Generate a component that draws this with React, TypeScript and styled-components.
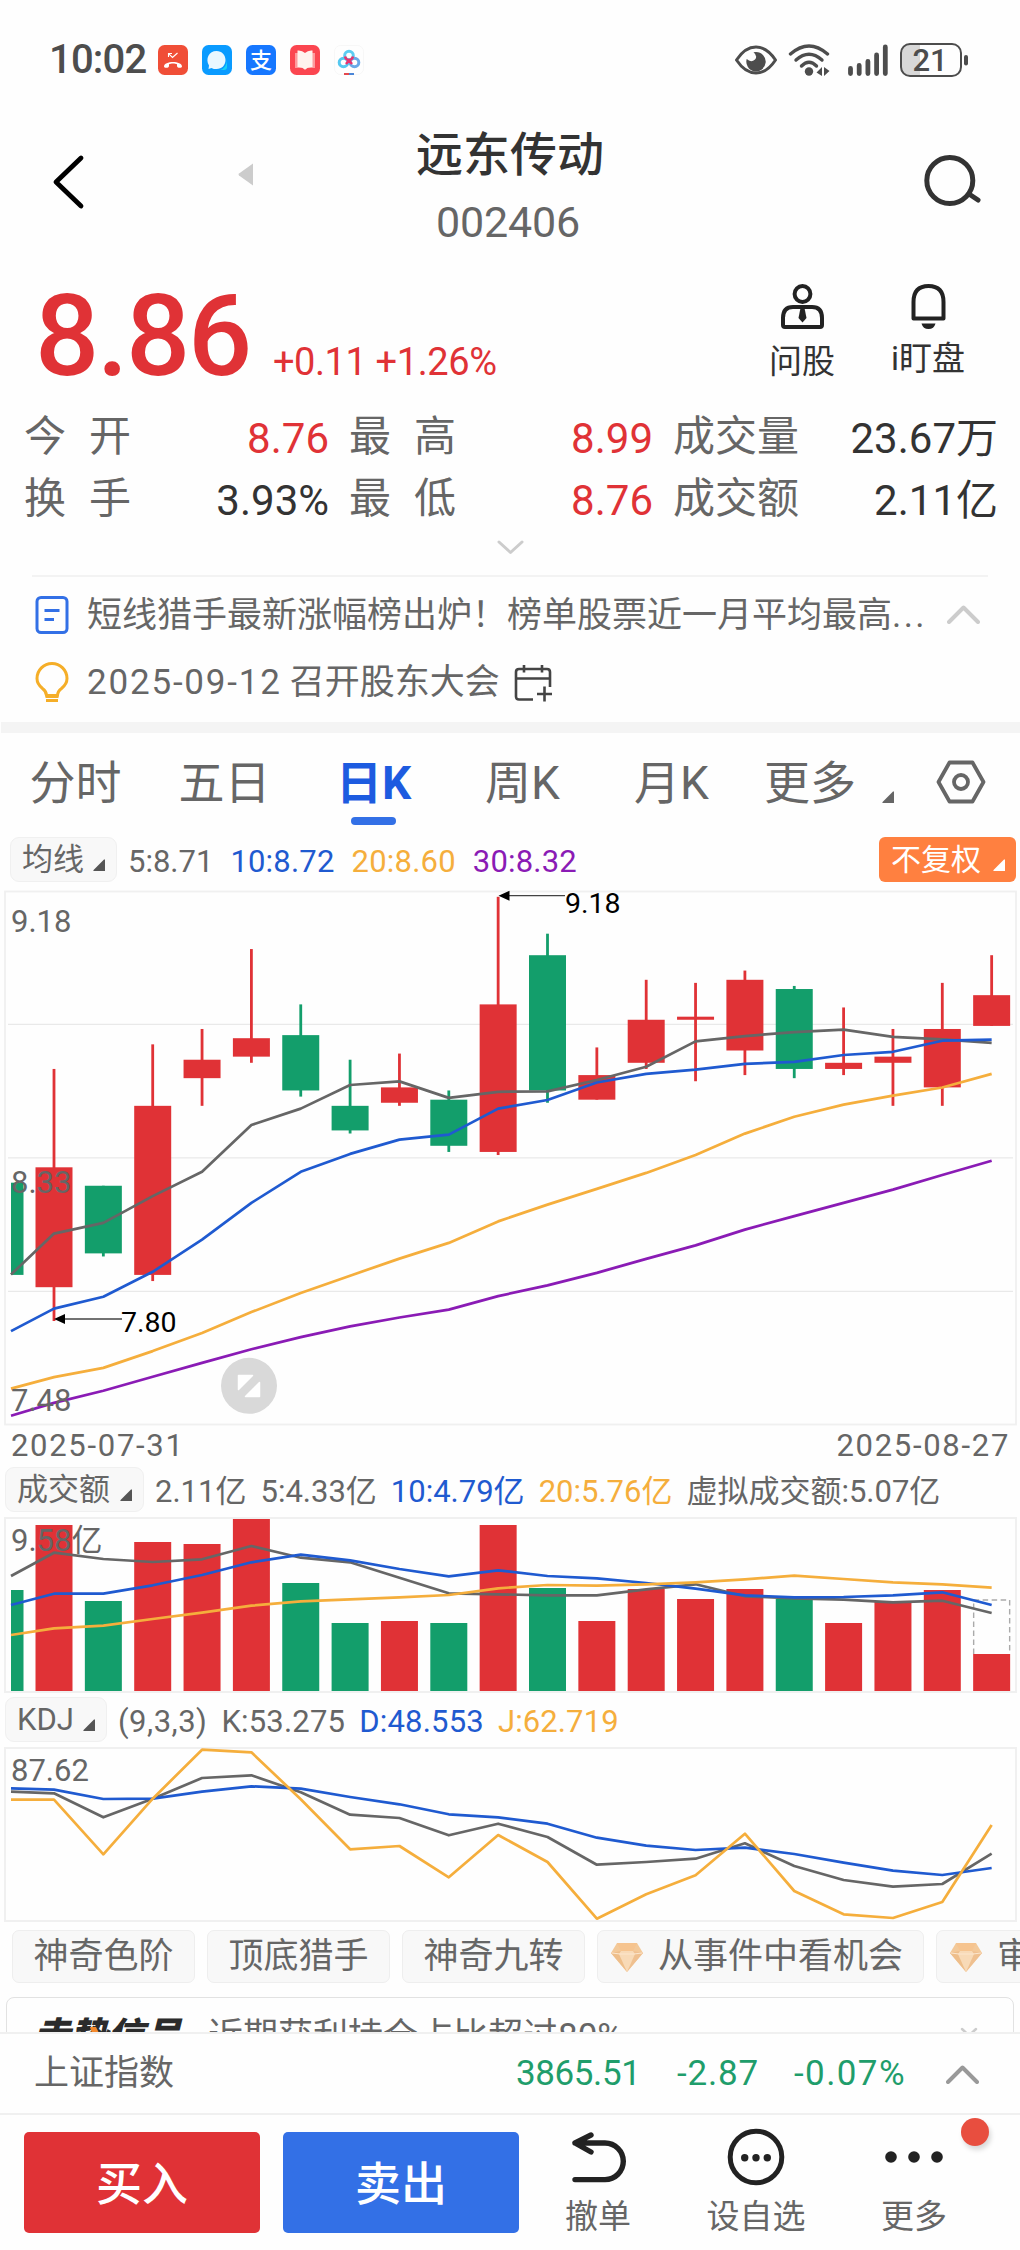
import React from 'react';
import styled, { createGlobalStyle } from 'styled-components';

const RED = '#e03236';
const GREEN = '#139e6b';
const BLUE = '#1f5ad0';
const AMBER = '#f5ae3c';
const PURPLE = '#8a1bb5';
const GREY = '#666666';
const FONT = "Roboto, 'Noto Sans CJK SC', sans-serif";

const GlobalStyle = createGlobalStyle`
  body { margin: 0; background: #fff; }
  * { box-sizing: border-box; }
  svg { display: block; flex: none; }
`;

const Page = styled.div`
  display: flex;
  flex-direction: column;
  width: 1020px;
  height: 2250px;
  overflow: hidden;
  background: #fefefe;
  color: ${GREY};
  font-family: ${FONT};
  white-space: nowrap;
`;

/* ---------- status bar ---------- */

const StatusBar = styled.div`
  display: flex;
  align-items: center;
  height: 120px;
  padding: 0 52px 0 49px;
`;
const Clock = styled.span`
  width: 109px;
  color: #4d4d4d;
  font-size: 40px;
  font-weight: 500;
  line-height: 48px;
  letter-spacing: -0.8px;
`;
const AppIcons = styled.div`
  display: flex;
  gap: 14px;
  flex: 1;
`;
const SystemIcons = styled.div`
  display: flex;
  align-items: center;
`;

/* ---------- title bar ---------- */

const TitleBar = styled.header`
  display: grid;
  grid-template-columns: 300px 1fr 300px;
  height: 140px;
`;
const TitleSide = styled.div<{ $end?: boolean }>`
  display: flex;
  align-items: center;
  justify-content: ${p => (p.$end ? 'flex-end' : 'flex-start')};
  height: 123px;
  padding: ${p => (p.$end ? '0 38px 0 0' : '0 0 0 50px')};
`;
const PrevMark = styled.span`
  margin: 0 0 14px 152px;
`;
const TitleText = styled.div`
  display: flex;
  flex-direction: column;
  align-items: center;
`;
const StockName = styled.h1`
  margin: 0;
  color: #333;
  font-size: 47px;
  font-weight: 500;
  line-height: 69px;
`;
const StockCode = styled.span`
  margin-right: 4px;
  font-size: 43px;
  line-height: 66px;
  letter-spacing: -0.2px;
`;

/* ---------- quote ---------- */

const QuoteHead = styled.section`
  display: flex;
  justify-content: space-between;
  height: 148px;
  padding: 0 29px 0 35px;
`;
const PriceLine = styled.div`
  display: flex;
  align-items: baseline;
  gap: 23px;
  padding-top: 17px;
  color: ${RED};
`;
const Price = styled.span`
  font-size: 113px;
  font-weight: 500;
  line-height: 120px;
  letter-spacing: -2.3px;
`;
const Change = styled.span`
  font-size: 38px;
  letter-spacing: -0.4px;
`;
const QuoteActions = styled.div`
  display: flex;
`;
const QuoteAction = styled.div<{ $gap: number }>`
  display: flex;
  flex-direction: column;
  align-items: center;
  gap: ${p => p.$gap}px;
  width: 126px;
  padding-top: 24px;
  color: #333;
  font-size: 33px;
  line-height: 38px;
`;

const StatGrid = styled.section`
  display: grid;
  grid-template-columns: 305px 304px 325px;
  column-gap: 20px;
  grid-auto-rows: 62px;
  padding: 0 23px 0 24px;
`;
const Stat = styled.div`
  display: flex;
  justify-content: space-between;
  font-size: 42px;
  line-height: 61px;
`;
const StatLabel = styled.span`
  line-height: 57px;
  word-spacing: 12.5px;
`;
const StatValue = styled.span<{ $up?: boolean }>`
  color: ${p => (p.$up ? RED : '#333')};
`;
const ExpandRow = styled.div`
  display: flex;
  align-items: center;
  justify-content: center;
  height: 43px;
  padding-bottom: 12px;
`;

/* ---------- notices ---------- */

const Notices = styled.section`
  margin: 0 32px;
  border-top: 2px solid #f3f3f3;
`;
const Notice = styled.div<{ $h: number }>`
  display: flex;
  align-items: center;
  height: ${p => p.$h}px;
  padding: 0 8px 0 3px;
  font-size: 35px;
  line-height: 44px;
`;
const NoticeText = styled.span`
  flex: 1;
  margin-left: 18px;
  padding-top: 2px;
`;
const Dots = styled.span`
  letter-spacing: 2.4px;
`;
const NoticeDate = styled.span`
  margin-left: 18px;
  letter-spacing: 1.8px;
`;
const NoticeEvent = styled.span`
  margin: 0 14px 0 8px;
`;
const Band = styled.div`
  height: 11px;
  margin: 9px 0 0 1px;
  background: #f4f4f4;
`;

/* ---------- period tabs ---------- */

const Tabs = styled.nav`
  display: flex;
  align-items: center;
  height: 98px;
  padding: 0 34px 0 1px;
`;
const Tab = styled.div<{ $active?: boolean }>`
  position: relative;
  width: 149px;
  padding-top: 2px;
  color: ${p => (p.$active ? '#1d5be0' : GREY)};
  font-size: 46px;
  font-weight: ${p => (p.$active ? 700 : 400)};
  line-height: 96px;
  text-align: center;
  &::after {
    content: '';
    display: ${p => (p.$active ? 'block' : 'none')};
    position: absolute;
    left: 52px;
    bottom: 6px;
    width: 45px;
    height: 8px;
    border-radius: 4px;
    background: #3370e6;
  }
`;
const MoreTab = styled.div`
  display: flex;
  align-items: center;
  flex: 1;
  gap: 26px;
  padding: 3px 0 0 18px;
  font-size: 46px;
  line-height: 95px;
`;
const MoreMark = styled.span`
  padding-top: 27px;
`;

/* ---------- indicator rows ---------- */

const Legend = styled.div<{ $top: number; $gap: number }>`
  display: flex;
  align-items: center;
  gap: ${p => p.$gap}px;
  height: 45px;
  margin-top: ${p => p.$top}px;
  padding: 0 4px 0 5px;
  font-size: 31px;
  line-height: 43px;
`;
const Chip = styled.span<{ $w: number; $left?: number; $mr?: number }>`
  display: flex;
  align-items: center;
  justify-content: space-between;
  width: ${p => p.$w}px;
  height: 45px;
  margin-left: ${p => p.$left ?? 0}px;
  margin-right: ${p => p.$mr ?? 0}px;
  padding: 0 10px 0 11px;
  border: 1px solid #f0f0f0;
  border-radius: 9px;
  background: #f8f8f8;
`;
const AdjustButton = styled.span`
  display: flex;
  align-items: center;
  justify-content: space-between;
  width: 137px;
  height: 45px;
  margin-left: auto;
  padding: 0 10px 0 12px;
  border-radius: 6px;
  background: #ff8040;
  color: #fff;
  font-size: 30px;
`;
const Corner = styled.span`
  padding-top: 11px;
`;
const Reading = styled.span<{ $c?: string; $ls?: number }>`
  padding-top: 3px;
  color: ${p => p.$c ?? GREY};
  letter-spacing: ${p => p.$ls ?? 0}px;
`;
const ChartBox = styled.div<{ $top: number }>`
  margin-top: ${p => p.$top}px;
`;
const Dates = styled.div`
  display: flex;
  justify-content: space-between;
  height: 41px;
  padding: 0 10px 0 11px;
  font-size: 31px;
  line-height: 39px;
  letter-spacing: 1.7px;
`;

/* ---------- strategy pills ---------- */

const Pills = styled.div`
  display: flex;
  gap: 12px;
  height: 53px;
  margin-top: 8px;
  padding-left: 12px;
`;
const Pill = styled.div<{ $gem?: boolean }>`
  display: flex;
  align-items: center;
  flex: none;
  gap: 15px;
  padding: ${p => (p.$gem ? '1px 20px 0 13px' : '1px 20.5px 0')};
  border: 1px solid #eee;
  border-radius: 7px;
  background: #f8f8f8;
  font-size: 35px;
  line-height: 50px;
`;
const SignalArea = styled.div`
  height: 49px;
  padding: 14px 6px 0;
  overflow: hidden;
`;
const SignalCard = styled.div`
  display: flex;
  align-items: center;
  height: 80px;
  padding: 0 35px 0 26px;
  border: 1px solid #e2e2e2;
  border-radius: 8px;
  font-size: 35px;
  line-height: 76px;
`;
const SignalLogo = styled.span`
  position: relative;
  width: 175px;
  color: #2b2b2b;
  font-size: 37px;
  font-style: italic;
  font-weight: 900;
`;
const LogoSlash = styled.span`
  position: absolute;
  left: 57px;
  top: 28px;
`;
const SignalText = styled.span`
  flex: 1;
`;
const SignalToggle = styled.span`
  padding-bottom: 9px;
`;

/* ---------- index bar and footer ---------- */

const IndexBar = styled.div`
  display: flex;
  align-items: center;
  height: 83px;
  padding: 1px 41px 0 34px;
  border-top: 2px solid #f0f0f0;
  border-bottom: 2px solid #f0f0f0;
  font-size: 35px;
  line-height: 44px;
`;
const IndexName = styled.span`
  width: 482px;
`;
const IndexValue = styled.span<{ $w: number; $ls: number }>`
  width: ${p => p.$w}px;
  color: #1f9d6b;
  letter-spacing: ${p => p.$ls}px;
`;
const Footer = styled.footer`
  display: flex;
  align-items: flex-start;
  height: 135px;
  padding: 17px 0 0 24px;
`;
const TradeButton = styled.button<{ $bg: string }>`
  width: 236px;
  height: 101px;
  margin: 0 23px 0 0;
  padding: 0 0 5px;
  border: 0;
  border-radius: 5px;
  background: ${p => p.$bg};
  color: #fff;
  font-family: ${FONT};
  font-size: 46px;
  font-weight: 500;
`;
const FooterActions = styled.div`
  display: flex;
  margin: -5px 0 0 -23px;
`;
const FooterAction = styled.div`
  display: flex;
  flex-direction: column;
  align-items: center;
  position: relative;
  gap: 9px;
  width: 158px;
  font-size: 33px;
  line-height: 42px;
`;
const RedDot = styled.span`
  position: absolute;
  top: -9px;
  left: 126px;
  width: 28px;
  height: 28px;
  border-radius: 50%;
  background: #e84e3f;
  box-shadow: 2px 4px 5px rgba(0, 0, 0, 0.15);
`;

/* ---------- icons ---------- */

const CornerMark = ({ color = '#555', size = 13 }: { color?: string; size?: number }) => (
  <svg width={size} height={12} viewBox="0 0 13 12">
    <path d="M12 0.5V12H0.5Q0 11.5 0.8 10.8L11 0.6Z" fill={color} />
  </svg>
);

const Chevron = ({ w, h, color, up, stroke = 4 }: { w: number; h: number; color: string; up?: boolean; stroke?: number }) => (
  <svg width={w} height={h} viewBox={`0 0 ${w} ${h}`} fill="none" stroke={color} strokeWidth={stroke} strokeLinecap="round" strokeLinejoin="round">
    <path d={up ? `M2 ${h - 2}L${w / 2} 2.5L${w - 2} ${h - 2}` : `M2 2L${w / 2} ${h - 2.5}L${w - 2} 2`} />
  </svg>
);

const Gem = () => (
  <svg width="32" height="29" viewBox="0 0 32 29">
    <path d="M6 0H26L32 10L16 29L0 10Z" fill="#f3c999" />
    <path d="M6 0H26L22 8H10Z" fill="#f6c48f" />
    <path d="M0 10L10 8L16 29Z" fill="#eebe8a" />
    <path d="M32 10L22 8L16 29Z" fill="#efc090" />
    <path d="M10 8H22L24 11L16 29L8 11Z" fill="#f8dab7" />
    <path d="M1 10L9 11H23L31 10" fill="none" stroke="#fbe6cd" strokeWidth="1.2" />
  </svg>
);

const AppBadges = () => (
  <>
    <svg width="30" height="30" viewBox="0 0 30 30">
      <rect width="30" height="30" rx="6.5" fill="#f04e37" />
      <path d="M6 21.5C6 15.5 24 15.5 24 21.5C24 23.5 19 23.3 19 21V19.3C17 18.3 13 18.3 11 19.3V21C11 23.3 6 23.5 6 21.5Z" fill="#fff" />
      <path d="M10.500 12V8.500H14M10.800 8.800L14.500 12.500L19.500 8" fill="none" stroke="#fff" strokeWidth="1.1" />
    </svg>
    <svg width="30" height="30" viewBox="0 0 30 30">
      <rect width="30" height="30" rx="6.5" fill="#0a9bff" />
      <path d="M18 25Q25 23 25 14V22Q25 25 22 25Z" fill="#19d2f5" />
      <path d="M14.500 6C20 6 23.500 10 23.500 15C23.500 20 20 24 14.500 24C12.500 24 11 24 9.500 23L6.500 24L7 20.500C3 14 7 6 14.500 6Z" fill="#eaf7ff" />
    </svg>
    <svg width="30" height="30" viewBox="0 0 30 30">
      <rect width="30" height="30" rx="6.5" fill="#1677ff" />
      <text x="15" y="23" textAnchor="middle" fontFamily={FONT} fontSize="22" fontWeight="500" fill="#fff">支</text>
    </svg>
    <svg width="30" height="30" viewBox="0 0 30 30">
      <rect width="30" height="30" rx="6.5" fill="#fb4650" />
      <path d="M5 8H25V23H17L15 25L13 23H5Z" fill="#fd9a9c" />
      <path d="M7.500 5.500Q12 5 15 8Q18 5 22.500 5.500V22Q18 21.500 15 24.500Q12 21.500 7.500 22Z" fill="#fff3ee" />
    </svg>
    <svg width="30" height="30" viewBox="0 0 30 30" fill="none" strokeWidth="3">
      <rect x="0.500" y="0.500" width="29" height="29" rx="6" stroke="#f7f7f7" strokeWidth="1" />
      <circle cx="9.500" cy="17.500" r="4.300" stroke="#55c8f0" />
      <circle cx="20.500" cy="17.500" r="4.300" stroke="#6aa9e8" />
      <circle cx="15" cy="10.500" r="4.300" stroke="#5ccdf2" />
      <path d="M11 11.500Q12 15 15 15Q18 15 19 11.500M12 19L15 15.500L18 19" stroke="#e8336e" strokeWidth="2.600" />
      <path d="M10 29H15" stroke="#e5484d" strokeWidth="2" />
      <path d="M15 29H20" stroke="#4b86d8" strokeWidth="2" />
    </svg>
  </>
);

const SystemBadges = () => (
  <svg width="234" height="36" viewBox="733 41 234 36">
    <path d="M735.500 59Q744 46 755 46Q766 46 774.500 59Q766 72 755 72Q744 72 735.500 59Z" fill="none" stroke="#4d4d4d" strokeWidth="3" strokeLinejoin="round" />
    <path d="M755 51A9.700 9.700 0 1 1 745.700 58Q750 62 754 58.500Q757 55 752.500 51.300Z" fill="#4d4d4d" />
    <g fill="none" stroke="#4d4d4d" strokeWidth="3.400" strokeLinecap="round">
      <path d="M789.500 53Q808 37 826.500 53" />
      <path d="M795 59Q808 47.500 821 59" />
      <path d="M800.500 65Q808 57.500 815.500 65" />
    </g>
    <circle cx="808" cy="70.500" r="4.200" fill="#4d4d4d" />
    <path d="M821 66V75L815.500 71.500ZM823 66L828.500 70L823 75Z" fill="#4d4d4d" />
    <g stroke="#4d4d4d" strokeWidth="4.800" strokeLinecap="round">
      <path d="M849.500 67.500V72.500M858.200 64.500V72.500M866.900 60.500V72.500M875.600 54V72.500M884.300 46V72.500" />
    </g>
    <path d="M919 43.500H909Q900.500 43.500 900.500 52V66Q900.500 74.500 909 74.500H919Z" fill="#d8d8d8" />
    <rect x="900" y="43" width="60" height="32" rx="9" fill="none" stroke="#4d4d4d" strokeWidth="2" />
    <rect x="963" y="54" width="4" height="10.500" rx="2" fill="#4d4d4d" />
    <text x="929" y="70" textAnchor="middle" fontFamily={FONT} fontSize="31" fontWeight="500" fill="#4d4d4d">21</text>
  </svg>
);

/* ---------- charts ---------- */

const FIRST_X = 54;
const STEP = 49.35;
const BAR = 37;
const centre = (i: number) => FIRST_X + STEP * i;

/* high, body top, body bottom, low, rising */
const candles: [number, number, number, number, boolean][] = [
  [8.62, 8.3, 7.91, 7.8, true],
  [8.24, 8.24, 8.02, 8.01, false],
  [8.7, 8.5, 7.95, 7.93, true],
  [8.75, 8.65, 8.59, 8.5, true],
  [9.01, 8.72, 8.66, 8.64, true],
  [8.83, 8.73, 8.55, 8.53, false],
  [8.65, 8.5, 8.42, 8.41, false],
  [8.67, 8.56, 8.51, 8.5, true],
  [8.55, 8.52, 8.37, 8.35, false],
  [9.18, 8.83, 8.35, 8.34, true],
  [9.06, 8.99, 8.55, 8.51, false],
  [8.69, 8.6, 8.52, 8.52, true],
  [8.91, 8.78, 8.64, 8.62, true],
  [8.9, 8.79, 8.78, 8.58, true],
  [8.94, 8.91, 8.68, 8.6, true],
  [8.89, 8.88, 8.62, 8.59, false],
  [8.82, 8.64, 8.62, 8.6, true],
  [8.75, 8.66, 8.64, 8.5, true],
  [8.9, 8.75, 8.56, 8.5, true],
  [8.99, 8.86, 8.76, 8.76, true],
];
const priceY = (p: number) => 6.8 + (9.18 - p) * 307.4;

const priceLines = [
  { color: GREY, v: [1105, 990, 960, 885, 817, 686, 640, 574, 564, 610, 593, 592, 560, 523, 452, 437, 426, 419, 439, 446, 456] },
  { color: AMBER, v: [1424, 1392, 1366, 1319, 1268, 1210, 1156, 1108, 1060, 1016, 956, 909, 865, 820, 770, 710, 663, 629, 604, 581, 543] },
  { color: PURPLE, v: [1500, 1464, 1430, 1391, 1352, 1314, 1280, 1250, 1225, 1203, 1165, 1135, 1100, 1061, 1023, 979, 941, 904, 867, 826, 786] },
  { color: BLUE, v: [1263, 1200, 1167, 1097, 1007, 904, 817, 767, 727, 713, 640, 616, 567, 543, 531, 515, 509, 490, 481, 450, 447] },
];
const volumeTops = [285, 513, 336, 342, 267, 459, 579, 573, 579, 285, 474, 573, 477, 507, 477, 507, 579, 516, 480, 672];
const volumeLines = [
  { color: GREY, v: [438, 368, 387, 396, 388, 348, 383, 397, 443, 490, 493, 496, 496, 478, 463, 499, 505, 509, 517, 512, 549] },
  { color: BLUE, v: [525, 491, 491, 466, 435, 397, 374, 391, 417, 439, 421, 438, 445, 459, 476, 496, 502, 501, 496, 487, 525] },
  { color: AMBER, v: [615, 595, 587, 567, 548, 527, 514, 508, 502, 495, 475, 465, 467, 463, 457, 448, 437, 447, 457, 463, 473] },
];
const kdjLines = [
  { color: GREY, v: [275, 280, 352, 296, 234, 226, 277, 344, 354, 406, 371, 411, 494, 486, 476, 430, 498, 540, 560, 552, 461] },
  { color: BLUE, v: [265, 269, 297, 296, 275, 259, 266, 291, 313, 343, 352, 371, 413, 437, 450, 443, 462, 488, 512, 525, 504] },
  { color: AMBER, v: [299, 299, 463, 296, 149, 157, 298, 448, 438, 532, 405, 486, 656, 583, 526, 401, 573, 643, 654, 606, 375] },
];

const Lines = ({ data, toY }: { data: { color: string; v: number[] }[]; toY: (v: number) => number }) => (
  <g fill="none" strokeWidth="2.700" strokeLinejoin="round">
    {data.map(l => (
      <polyline
        key={l.color}
        stroke={l.color}
        points={l.v.map((v, i) => `${i === 0 ? 11 : centre(i - 1)},${toY(v).toFixed(1)}`).join(' ')}
      />
    ))}
  </g>
);

const AxisLabel = ({ x = 11, y, size = 31, color = GREY, children }: { x?: number; y: number; size?: number; color?: string; children: string }) => (
  <text x={x} y={y} fontFamily={FONT} fontSize={size} fill={color}>{children}</text>
);

const CandleChart = () => (
  <svg width="1020" height="536" viewBox="0 0 1020 536">
    <rect x="5" y="1.500" width="1011" height="533" fill="none" stroke="#f0f0f0" strokeWidth="1.800" />
    {[134.300, 267.900, 401.400].map(y => (
      <path key={y} d={`M8 ${y}H1013`} stroke="#e9e9e9" strokeWidth="1.200" />
    ))}
    <rect x="11" y={priceY(8.25)} width="12.500" height={priceY(7.95) - priceY(8.25)} fill={GREEN} />
    {candles.map(([high, top, bottom, low, up], i) => (
      <g key={i} fill={up ? RED : GREEN}>
        <rect x={centre(i) - 1.400} y={priceY(high)} width="2.800" height={priceY(low) - priceY(high)} />
        <rect x={centre(i) - BAR / 2} y={priceY(top)} width={BAR} height={priceY(bottom) - priceY(top)} />
      </g>
    ))}
    <Lines data={priceLines} toY={v => v / 2.8 - 10} />
    <AxisLabel y={42}>9.18</AxisLabel>
    <AxisLabel y={303}>8.33</AxisLabel>
    <AxisLabel y={521}>7.48</AxisLabel>
    <path d="M508 5.700H565M64 429H122" stroke="#444" strokeWidth="1.300" />
    <path d="M498.500 5.700L509.500 0.700V10.700ZM54 429L65 424V434Z" fill="#000" />
    <AxisLabel x={565} y={23.200} size={28.500} color="#000">9.18</AxisLabel>
    <AxisLabel x={121} y={442} size={28.500} color="#000">7.80</AxisLabel>
    <circle cx="249" cy="495.800" r="28" fill="#d9d9d9" />
    <path d="M238.500 485.500H252.500L238.500 499.500ZM259.500 492.500V506.500H245.500Z" fill="#fff" stroke="#fff" strokeWidth="1.500" strokeLinejoin="round" />
  </svg>
);

const VolumeChart = () => {
  const toY = (v: number) => v / 3 - 87;
  return (
    <svg width="1020" height="176" viewBox="0 0 1020 176">
      <rect x="5" y="1" width="1011" height="174" fill="none" stroke="#f0f0f0" strokeWidth="2" />
      <rect x="11" y={toY(480)} width="12.500" height={174 - toY(480)} fill={GREEN} />
      {volumeTops.map((v, i) => (
        <rect key={i} x={centre(i) - BAR / 2} y={toY(v)} width={BAR} height={174 - toY(v)} fill={candles[i][4] ? RED : GREEN} />
      ))}
      <path d={`M${centre(19) - 18} 137V83H${centre(19) + 18}V137`} fill="none" stroke="#aaa" strokeWidth="1.400" strokeDasharray="5.500 3.500" />
      <Lines data={volumeLines} toY={toY} />
      <AxisLabel y={33.700}>9.58亿</AxisLabel>
    </svg>
  );
};

const KdjChart = () => (
  <svg width="1020" height="175" viewBox="0 0 1020 175">
    <rect x="5" y="1" width="1011" height="173" fill="none" stroke="#f0f0f0" strokeWidth="2" />
    <Lines data={kdjLines} toY={v => v / 3 - 47} />
    <AxisLabel y={34}>87.62</AxisLabel>
  </svg>
);

/* ---------- page ---------- */

const stats = [
  { label: '今 开', value: '8.76', up: true },
  { label: '最 高', value: '8.99', up: true },
  { label: '成交量', value: '23.67万' },
  { label: '换 手', value: '3.93%' },
  { label: '最 低', value: '8.76', up: true },
  { label: '成交额', value: '2.11亿' },
];

export default function App() {
  return (
    <>
      <GlobalStyle />
      <Page>
        <StatusBar>
          <Clock>10:02</Clock>
          <AppIcons><AppBadges /></AppIcons>
          <SystemIcons><SystemBadges /></SystemIcons>
        </StatusBar>

        <TitleBar>
          <TitleSide>
            <svg width="36" height="56" viewBox="0 0 36 56" fill="none" stroke="#000" strokeWidth="4.800" strokeLinecap="round" strokeLinejoin="round">
              <path d="M31 4L6 28L31 52" />
            </svg>
            <PrevMark>
              <svg width="15" height="23" viewBox="0 0 15 23"><path d="M15 0.500V22.500L1 12.500Q0 11.500 1 10.500Z" fill="#ccc" /></svg>
            </PrevMark>
          </TitleSide>
          <TitleText>
            <StockName>远东传动</StockName>
            <StockCode>002406</StockCode>
          </TitleText>
          <TitleSide $end>
            <svg width="62" height="58" viewBox="0 0 62 58" fill="none" stroke="#333" strokeWidth="5" strokeLinecap="round">
              <circle cx="29.800" cy="27.500" r="23" />
              <path d="M49 41L58 47" />
            </svg>
          </TitleSide>
        </TitleBar>

        <QuoteHead>
          <PriceLine>
            <Price>8.86</Price>
            <Change>+0.11 +1.26%</Change>
          </PriceLine>
          <QuoteActions>
            <QuoteAction $gap={14}>
              <svg width="43" height="45" viewBox="0 0 43 45" fill="none" stroke="#222" strokeWidth="4">
                <circle cx="21.500" cy="10" r="7.900" />
                <path d="M2 41V34Q2 23 12 23H31Q41 23 41 34V41Q41 43 39 43H4Q2 43 2 41Z" />
                <path d="M19.500 24H23.500L25.500 34L21.500 38.500L17.500 34Z" fill="#222" stroke="none" />
              </svg>
              问股
            </QuoteAction>
            <QuoteAction $gap={11}>
              <svg width="35" height="45" viewBox="0 0 35 45" fill="none" stroke="#222" strokeWidth="4">
                <path d="M2.500 34.500V18Q2.500 2 17.500 2Q32.500 2 32.500 18V34.500Z" strokeLinejoin="round" />
                <path d="M10.500 39.500H24.500Q23 45 17.500 45Q12 45 10.500 39.500Z" fill="#222" stroke="none" />
              </svg>
              i盯盘
            </QuoteAction>
          </QuoteActions>
        </QuoteHead>

        <StatGrid>
          {stats.map(s => (
            <Stat key={s.label}>
              <StatLabel>{s.label}</StatLabel>
              <StatValue $up={s.up}>{s.value}</StatValue>
            </Stat>
          ))}
        </StatGrid>
        <ExpandRow><Chevron w={27} h={15} color="#ccc" stroke={3} /></ExpandRow>

        <Notices>
          <Notice $h={75}>
            <svg width="34" height="38" viewBox="0 0 34 38" fill="none" stroke="#3370e6" strokeWidth="3">
              <rect x="2" y="1.500" width="30" height="35" rx="4" />
              <path d="M9.500 14.500H24.500M9.500 23.500H19" />
            </svg>
            <NoticeText>短线猎手最新涨幅榜出炉！榜单股票近一月平均最高<Dots>...</Dots></NoticeText>
            <Chevron w={33} h={19} color="#ccc" up />
          </Notice>
          <Notice $h={61}>
            <svg width="34" height="41" viewBox="0 0 34 41" fill="none" stroke="#f5ae28" strokeWidth="3">
              <path d="M11.500 33.500Q11.500 29.500 7.500 26.500Q2 22 2 16.500A15 15 0 0 1 32 16.500Q32 22 26.500 26.500Q22.500 29.500 22.500 33.500Z" strokeLinejoin="round" />
              <path d="M10.500 34.500H23.500M11 38.500H23" />
            </svg>
            <NoticeDate>2025-09-12</NoticeDate>
            <NoticeEvent>召开股东大会</NoticeEvent>
            <svg width="38" height="38" viewBox="0 0 38 38" fill="none" stroke="#444" strokeWidth="2.600">
              <path d="M19 35.500H5Q2 35.500 2 32.500V8Q2 5 5 5H33Q36 5 36 8V23M2 14.500H36M10 1V8.500M28 1V8.500M23 30H38M30.500 22.500V37.500" />
            </svg>
          </Notice>
        </Notices>
        <Band />

        <Tabs>
          <Tab>分时</Tab>
          <Tab>五日</Tab>
          <Tab $active>日K</Tab>
          <Tab>周K</Tab>
          <Tab>月K</Tab>
          <MoreTab>
            更多
            <MoreMark><CornerMark color="#666" /></MoreMark>
          </MoreTab>
          <svg width="50" height="44" viewBox="0 0 50 44" fill="none" stroke="#666" strokeWidth="3.800" strokeLinejoin="round">
            <path d="M2.500 22L13.500 2.500H36.500L47.500 22L36.500 41.500H13.500Z" />
            <circle cx="25" cy="22" r="7" />
          </svg>
        </Tabs>

        <Legend $top={6} $gap={17}>
          <Chip $w={107} $left={5} $mr={-6}>均线<Corner><CornerMark /></Corner></Chip>
          <Reading>5:8.71</Reading>
          <Reading $c={BLUE} $ls={0.2}>10:8.72</Reading>
          <Reading $c={AMBER} $ls={0.2}>20:8.60</Reading>
          <Reading $c={PURPLE} $ls={0.2}>30:8.32</Reading>
          <AdjustButton>不复权<Corner><CornerMark color="#fff" /></Corner></AdjustButton>
        </Legend>
        <ChartBox $top={8}><CandleChart /></ChartBox>
        <Dates><span>2025-07-31</span><span>2025-08-27</span></Dates>

        <Legend $top={0} $gap={14}>
          <Chip $w={139} $mr={-3}>成交额<Corner><CornerMark /></Corner></Chip>
          <Reading>2.11亿</Reading>
          <Reading>5:4.33亿</Reading>
          <Reading $c={BLUE}>10:4.79亿</Reading>
          <Reading $c={AMBER}>20:5.76亿</Reading>
          <Reading>虚拟成交额:5.07亿</Reading>
        </Legend>
        <ChartBox $top={5}><VolumeChart /></ChartBox>

        <Legend $top={4} $gap={14}>
          <Chip $w={102} $mr={-3}>KDJ<Corner><CornerMark /></Corner></Chip>
          <Reading $ls={0.5}>(9,3,3)</Reading>
          <Reading $ls={0.2}>K:53.275</Reading>
          <Reading $c={BLUE} $ls={0.2}>D:48.553</Reading>
          <Reading $c={AMBER} $ls={0.1}>J:62.719</Reading>
        </Legend>
        <ChartBox $top={5}><KdjChart /></ChartBox>

        <Pills>
          <Pill>神奇色阶</Pill>
          <Pill>顶底猎手</Pill>
          <Pill>神奇九转</Pill>
          <Pill $gem><Gem />从事件中看机会</Pill>
          <Pill $gem><Gem />审</Pill>
        </Pills>
        <SignalArea>
          <SignalCard>
            <SignalLogo>
              走势信号
              <LogoSlash>
                <svg width="12" height="12" viewBox="0 0 12 12"><path d="M0 0H6L12 12H4Z" fill="#f58a2c" /></svg>
              </LogoSlash>
            </SignalLogo>
            <SignalText>近期获利持仓占比超过80%</SignalText>
            <SignalToggle><Chevron w={18} h={11} color="#ccc" stroke={2.5} /></SignalToggle>
          </SignalCard>
        </SignalArea>

        <IndexBar>
          <IndexName>上证指数</IndexName>
          <IndexValue $w={161} $ls={-0.4}>3865.51</IndexValue>
          <IndexValue $w={117} $ls={0.8}>-2.87</IndexValue>
          <IndexValue $w={152} $ls={1.4}>-0.07%</IndexValue>
          <Chevron w={33} h={19} color="#999" up />
        </IndexBar>

        <Footer>
          <TradeButton $bg={RED}>买入</TradeButton>
          <TradeButton $bg="#3370e6">卖出</TradeButton>
          <FooterActions>
            <FooterAction>
              <svg width="60" height="60" viewBox="0 0 60 60" fill="none" stroke="#222" strokeWidth="5.400" strokeLinecap="round" strokeLinejoin="round">
                <path d="M23 8L7 16L23 25M7 16H37A18.300 18.300 0 0 1 37 52.600H7" />
              </svg>
              撤单
            </FooterAction>
            <FooterAction>
              <svg width="60" height="60" viewBox="0 0 60 60" fill="#222">
                <circle cx="30" cy="30" r="25.800" fill="none" stroke="#222" strokeWidth="5" />
                <circle cx="18.700" cy="30.700" r="3.700" />
                <circle cx="30" cy="30.700" r="3.700" />
                <circle cx="41.300" cy="30.700" r="3.700" />
              </svg>
              设自选
            </FooterAction>
            <FooterAction>
              <svg width="60" height="60" viewBox="0 0 60 60" fill="#222">
                <circle cx="7" cy="30" r="5.800" />
                <circle cx="30" cy="30" r="5.800" />
                <circle cx="53" cy="30" r="5.800" />
              </svg>
              更多
              <RedDot />
            </FooterAction>
          </FooterActions>
        </Footer>
      </Page>
    </>
  );
}
